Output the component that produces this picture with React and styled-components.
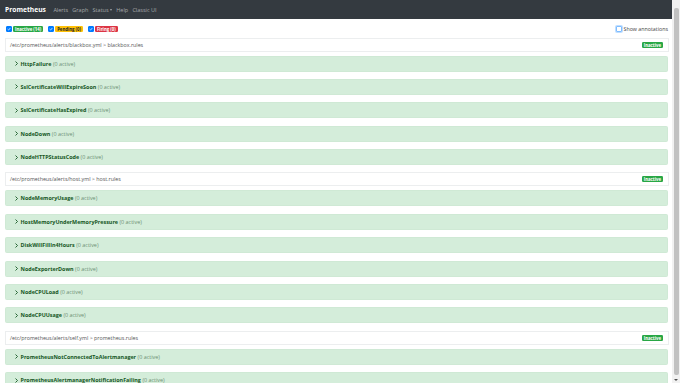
import React from 'react'
import styled, { createGlobalStyle } from 'styled-components'

const GlobalStyle = createGlobalStyle`
    html, body {
        margin: 0;
        padding: 0;
        background: #fff;
        font-family: "Open Sans", "Noto Sans", sans-serif;
    }
`

const GROUPS = [
    {
        file: '/etc/prometheus/alerts/blackbox.yml > blackbox.rules',
        rules: ['HttpFailure', 'SslCertificateWillExpireSoon', 'SslCertificateHasExpired', 'NodeDown', 'NodeHTTPStatusCode'],
    },
    {
        file: '/etc/prometheus/alerts/host.yml > host.rules',
        rules: ['NodeMemoryUsage', 'HostMemoryUnderMemoryPressure', 'DiskWillFillIn4Hours', 'NodeExporterDown', 'NodeCPULoad', 'NodeCPUUsage'],
    },
    {
        file: '/etc/prometheus/alerts/self.yml > prometheus.rules',
        rules: ['PrometheusNotConnectedToAlertmanager', 'PrometheusAlertmanagerNotificationFailing', 'PrometheusTargetMissing'],
    },
]

const Screen = styled.div`
    display: flex;
    height: 383px;
    overflow: hidden;
`

const Main = styled.div`
    flex: 1;
    min-width: 0;
`

const Scrollbar = styled.div`
    width: 8px;
    background: #f1f1f1;
    display: flex;
    flex-direction: column;
    align-items: center;
    padding: 8px 0 2px;
    box-sizing: border-box;
`

const Thumb = styled.div`
    width: 5px;
    flex: 1;
    background: #c1c1c1;
    border-radius: 2px;
`

const Arrow = styled.div`
    width: 0;
    height: 0;
    margin-top: 4px;
    border-left: 2px solid transparent;
    border-right: 2px solid transparent;
    border-top: 2px solid #505050;
`

const Navbar = styled.nav`
    height: 19px;
    background: #343a40;
    display: flex;
    align-items: center;
    padding: 0 5px;
`

const Brand = styled.span`
    color: #fff;
    font-weight: 700;
    font-size: 6.7px;
    margin-right: 7.5px;
`

const NavLinks = styled.div`
    display: flex;
    align-items: center;
    gap: 4.2px;
`

const NavLink = styled.span`
    color: rgba(255, 255, 255, 0.55);
    font-size: 5.5px;
    display: flex;
    align-items: center;
`

const Caret = styled.span`
    margin-left: 1.5px;
    border-left: 1.6px solid transparent;
    border-right: 1.6px solid transparent;
    border-top: 2px solid rgba(255, 255, 255, 0.55);
`

const Content = styled.div`
    padding: 0 3px 0 5px;
`

const Controls = styled.div`
    display: flex;
    align-items: center;
    justify-content: space-between;
    height: 6px;
    padding: 7px 0 0 1px;
    margin-bottom: 5.5px;
`

const Filters = styled.div`
    display: flex;
    align-items: center;
    gap: 5px;
`

const Filter = styled.label`
    display: flex;
    align-items: center;
    gap: 1px;
`

const Box = styled.span`
    width: 6px;
    height: 6px;
    box-sizing: border-box;
    border-radius: 1px;
    display: flex;
    align-items: center;
    justify-content: center;
    background: ${ props => props.checked ? '#007bff' : '#fff' };
    border: 0.8px solid ${ props => props.checked ? '#007bff' : '#80bdff' };
    box-shadow: ${ props => props.checked ? 'none' : '0 0 0 1px rgba(0, 123, 255, 0.25)' };
`

const Badge = styled.span`
    font-size: 4.3px;
    font-weight: 700;
    line-height: 6px;
    padding: 0 2px;
    border-radius: 1.2px;
    background: ${ props => props.bg };
    color: ${ props => props.fg || '#fff' };
`

const Annotations = styled.label`
    display: flex;
    align-items: center;
    gap: 1.5px;
    margin-right: 1px;
    font-size: 5.3px;
    color: #444;
`

const GroupHeader = styled.div`
    height: 14px;
    box-sizing: border-box;
    border: 1px solid #eceeef;
    display: flex;
    align-items: center;
    justify-content: space-between;
    padding: 0 5px 0 4px;
    margin-bottom: 4px;
    font-size: 5.3px;
    color: #555;
`

const Alert = styled.div`
    height: 16px;
    margin: 0 1px 7.4px 0;
    background: #d4edda;
    border: 1px solid #cfe9d5;
    border-radius: 1.5px;
    box-sizing: border-box;
    display: flex;
    align-items: center;
    padding-left: 9px;
    font-size: 5.4px;
    color: #155724;
`

const Name = styled.strong`
    margin-left: 2.5px;
    margin-right: 1.5px;
`

const Count = styled.span`
    color: #6c8f74;
`

const Check = () => (
    <svg width="4" height="4" viewBox="0 0 8 8">
        <path d="M1.2 4.2 L3.2 6.1 L6.8 1.9" fill="none" stroke="#fff" strokeWidth="1.4" />
    </svg>
)

const Chevron = () => (
    <svg width="3" height="5" viewBox="0 0 6 10">
        <path d="M1 1 L5 5 L1 9" fill="none" stroke="#155724" strokeWidth="1.8" />
    </svg>
)

export default function App() {
    return (
        <Screen>
            <GlobalStyle />
            <Main>
                <Navbar>
                    <Brand>Prometheus</Brand>
                    <NavLinks>
                        <NavLink>Alerts</NavLink>
                        <NavLink>Graph</NavLink>
                        <NavLink>Status<Caret /></NavLink>
                        <NavLink>Help</NavLink>
                        <NavLink>Classic UI</NavLink>
                    </NavLinks>
                </Navbar>
                <Content>
                    <Controls>
                        <Filters>
                            <Filter><Box checked><Check /></Box><Badge bg="#28a745">Inactive (14)</Badge></Filter>
                            <Filter><Box checked><Check /></Box><Badge bg="#ffc107" fg="#212529">Pending (0)</Badge></Filter>
                            <Filter><Box checked><Check /></Box><Badge bg="#dc3545">Firing (0)</Badge></Filter>
                        </Filters>
                        <Annotations><Box />Show annotations</Annotations>
                    </Controls>
                    { GROUPS.map(group => (
                        <React.Fragment key={ group.file }>
                            <GroupHeader>
                                <span>{ group.file }</span>
                                <Badge bg="#28a745">Inactive</Badge>
                            </GroupHeader>
                            { group.rules.map(rule => (
                                <Alert key={ rule }>
                                    <Chevron />
                                    <Name>{ rule }</Name>
                                    <Count>(0 active)</Count>
                                </Alert>
                            )) }
                        </React.Fragment>
                    )) }
                </Content>
            </Main>
            <Scrollbar>
                <Thumb />
                <Arrow />
            </Scrollbar>
        </Screen>
    )
}
